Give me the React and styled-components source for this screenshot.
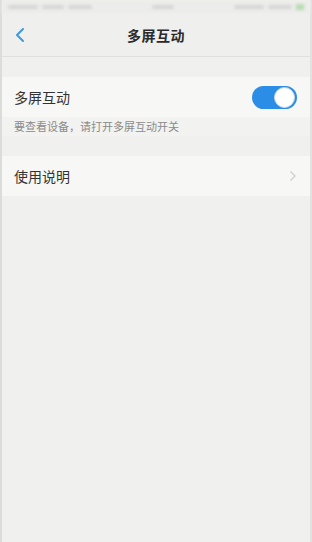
import React, { useState } from "react";
import styled, { createGlobalStyle } from "styled-components";

const GlobalStyle = createGlobalStyle`
  html, body {
    margin: 0;
    padding: 0;
    background: #f0f0ee;
  }
  body {
    font-family: "Noto Sans CJK SC", "Noto Sans", sans-serif;
  }
`;

const Screen = styled.div`
  width: 312px;
  height: 542px;
  box-sizing: border-box;
  background: #f0f0ee;
  border-left: 2px solid #dcdcda;
  border-right: 2px solid #e2e2e0;
  display: flex;
  flex-direction: column;
`;

const StatusBar = styled.div`
  height: 14px;
  display: flex;
  align-items: center;
  justify-content: space-between;
  padding: 0 6px;
  background: #ececea;
  filter: blur(1.5px);
`;

const StatusGroup = styled.div`
  display: flex;
  align-items: center;
  gap: 4px;
`;

const Blob = styled.span`
  width: ${(p) => p.$w}px;
  height: 4px;
  border-radius: 2px;
  background: #d6d6d4;
`;

const Battery = styled.span`
  width: 8px;
  height: 6px;
  background: #b7dcb2;
`;

const Header = styled.div`
  height: 42px;
  display: flex;
  align-items: center;
  justify-content: center;
  position: relative;
  background: #efefed;
  border-bottom: 1px solid #e0e0de;
`;

const BackIcon = styled.svg`
  position: absolute;
  left: 12px;
  top: 13px;
`;

const Title = styled.span`
  font-size: 14px;
  font-weight: 700;
  color: #2a2a2a;
  letter-spacing: 0.5px;
`;

const Row = styled.div`
  height: 40px;
  margin-top: ${(p) => p.$top || 0}px;
  display: flex;
  align-items: center;
  justify-content: space-between;
  padding: 0 13px 0 12px;
  background: #f7f7f5;
  font-size: 14px;
  color: #333;
`;

const Hint = styled.div`
  height: 17px;
  padding: 2px 0 0 12px;
  font-size: 11px;
  line-height: 14px;
  color: #8a8a8a;
  background: #f2f2f0;
`;

const Toggle = styled.div`
  width: 45px;
  height: 23px;
  border-radius: 12px;
  background: ${(p) => (p.$on ? "#2c8de6" : "#d9d9d9")};
  position: relative;
  cursor: pointer;
  &::after {
    content: "";
    position: absolute;
    top: 1px;
    left: ${(p) => (p.$on ? "22px" : "1px")};
    width: 19px;
    height: 19px;
    border-radius: 50%;
    background: #fff;
    border: 1px solid #c8d6e2;
  }
`;

export default function App() {
  const [on, setOn] = useState(true);
  return (
    <>
      <GlobalStyle />
      <Screen>
        <StatusBar>
          <StatusGroup>
            <Blob $w={30} />
            <Blob $w={22} />
            <Blob $w={24} />
          </StatusGroup>
          <Blob $w={22} />
          <StatusGroup>
            <Blob $w={30} />
            <Blob $w={24} />
            <Battery />
          </StatusGroup>
        </StatusBar>
        <Header>
          <BackIcon width="12" height="16" viewBox="0 0 12 16">
            <path d="M9 2 L3 8 L9 14" fill="none" stroke="#3c9ae0" strokeWidth="2" strokeLinecap="round" strokeLinejoin="round" />
          </BackIcon>
          <Title>多屏互动</Title>
        </Header>
        <Row $top={20}>
          <span>多屏互动</span>
          <Toggle $on={on} onClick={() => setOn(!on)} />
        </Row>
        <Hint>要查看设备，请打开多屏互动开关</Hint>
        <Row $top={20}>
          <span>使用说明</span>
          <svg width="8" height="12" viewBox="0 0 8 12">
            <path d="M1.5 1.5 L6 6 L1.5 10.5" fill="none" stroke="#cfcfcf" strokeWidth="1.3" />
          </svg>
        </Row>
      </Screen>
    </>
  );
}
